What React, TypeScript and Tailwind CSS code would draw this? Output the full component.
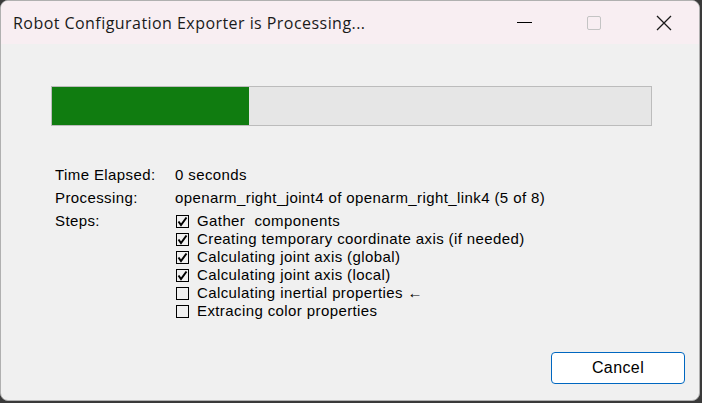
const steps = [
  { label: 'Gather  components', done: true },
  { label: 'Creating temporary coordinate axis (if needed)', done: true },
  { label: 'Calculating joint axis (global)', done: true },
  { label: 'Calculating joint axis (local)', done: true },
  { label: 'Calculating inertial properties \u2190', done: false },
  { label: 'Extracing color properties', done: false },
];

function Box({ checked }: { checked: boolean }) {
  return (
    <svg width="13" height="13" viewBox="0 0 13 13" className="ml-[1px] mr-[8px] shrink-0">
      <rect x="0.5" y="0.5" width="12" height="12" fill="none" stroke="#000" strokeWidth="1" />
      {checked && <path d="M2.5 6.5 L5 10 L10.5 2.5" fill="none" stroke="#000" strokeWidth="2" />}
    </svg>
  );
}

export default function App() {
  return (
    <div className="h-[403px] w-[702px] bg-[#3a3a3a]">
      <div className="flex h-[401px] w-[700px] flex-col overflow-hidden rounded-lg border border-[#b0b0b0] bg-[#f0f0f0]">
        {/* Title bar */}
        <div className="flex h-[43px] shrink-0 items-center bg-[#f8eef2]">
          <span className="pl-3 font-['Open_Sans',sans-serif] text-[16px] tracking-[0.45px] text-[#1a1a1a]">
            Robot Configuration Exporter is Processing...
          </span>
          <div className="ml-auto flex h-full shrink-0">
            <div className="flex w-[70px] shrink-0 items-center justify-center">
              <div className="h-0 w-[15px] shrink-0 border-t border-[#000000]" />
            </div>
            <div className="flex w-[70px] shrink-0 items-center justify-center">
              <div className="h-[14px] w-[14px] rounded-[2px] border border-[#c4c4c4]" />
            </div>
            <div className="flex w-[70px] shrink-0 items-center justify-center">
              <svg width="16" height="16" viewBox="0 0 16 16">
                <path d="M1 1 L15 15 M15 1 L1 15" stroke="#1a1a1a" strokeWidth="1.3" />
              </svg>
            </div>
          </div>
        </div>

        {/* Body */}
        <div className="flex flex-1 flex-col px-[50px] pt-[42px] font-['Liberation_Sans',Arial,sans-serif] text-[15px] tracking-[0.4px] text-black">
          <div className="h-[40px] w-[601px] border border-[#bcbcbc] bg-[#e6e6e6]">
            <div className="h-full w-[197px] bg-[#107c10]" />
          </div>

          <div className="mt-[38px] grid grid-cols-[120px_1fr] pl-[4px] leading-[18px]">
            <div className="py-[2px]">Time Elapsed:</div>
            <div className="py-[2px]">0 seconds</div>
            <div className="py-[3px]">Processing:</div>
            <div className="py-[3px]">openarm_right_joint4 of openarm_right_link4 (5 of 8)</div>
            <div className="pt-[2px]">Steps:</div>
            <div className="flex flex-col pt-[2px] leading-[18px]">
              {steps.map((s) => (
                <div key={s.label} className="flex items-center">
                  <Box checked={s.done} />
                  <span className="whitespace-pre">{s.label}</span>
                </div>
              ))}
            </div>
          </div>

          <div className="mt-auto mb-[16px] flex justify-end">
            <button className="-mr-[36px] h-[32px] w-[134px] rounded-[4px] border border-[#0067c0] bg-white font-['Liberation_Sans',Arial,sans-serif] text-[16px] text-black">
              Cancel
            </button>
          </div>
        </div>
      </div>
    </div>
  );
}
